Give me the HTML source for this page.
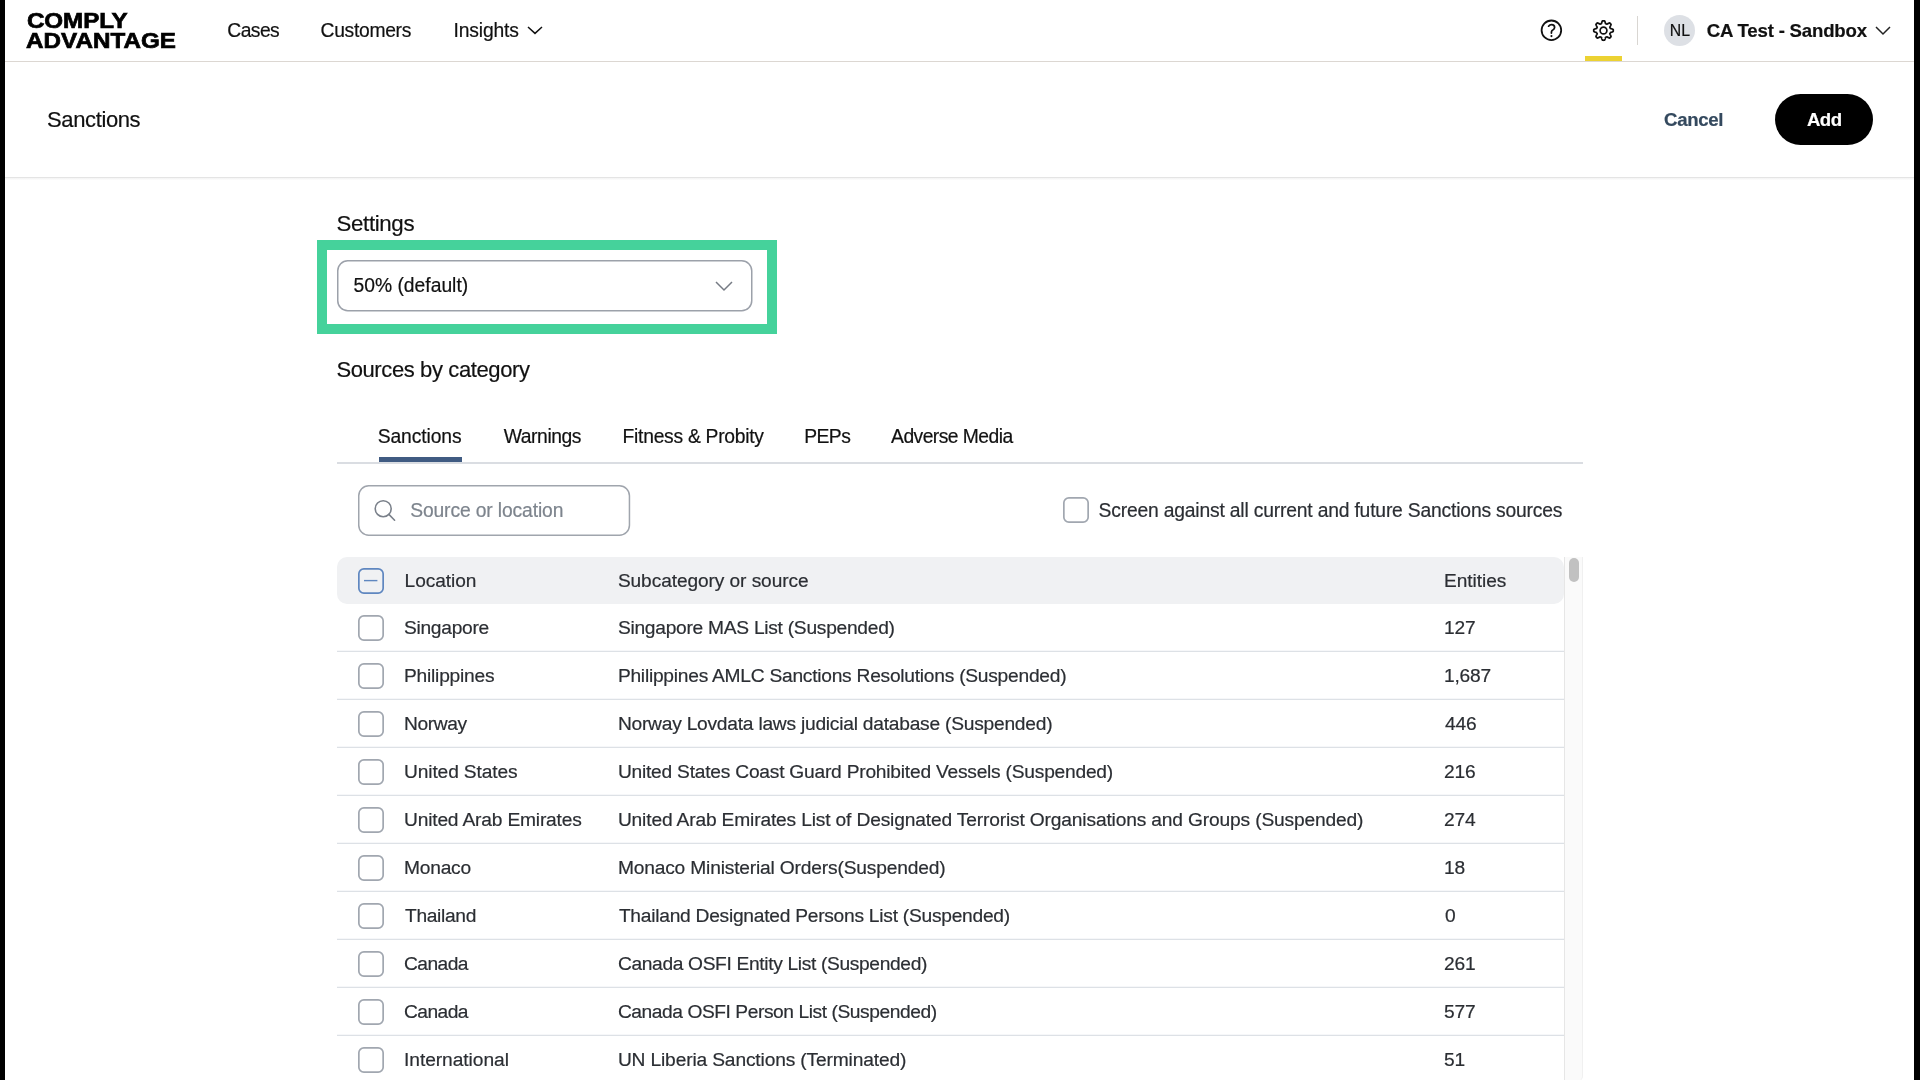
<!DOCTYPE html>
<html><head><meta charset="utf-8"><title>Sanctions</title>
<style>
html,body{margin:0;padding:0;background:#fff;width:1920px;height:1080px;overflow:hidden;position:relative}
body{font-family:"Liberation Sans", sans-serif}
.t{position:absolute;white-space:nowrap;font-family:"Liberation Sans", sans-serif;-webkit-text-stroke:0.2px currentColor}
</style></head><body>
<div style="position:absolute;left:0;top:0;width:1920px;height:1080px;will-change:transform">
<div style="position:absolute;left:0px;top:0px;width:5.00px;height:1080.00px;background:#000"></div>
<div style="position:absolute;left:1914px;top:0px;width:6.00px;height:1080.00px;background:#000"></div>
<div style="position:absolute;left:5px;top:61px;width:1909.00px;height:1.00px;background:#dcd7d2"></div>
<div class="t" style="left:26.80px;top:10.40px;font-size:22px;line-height:22px;font-weight:700;letter-spacing:-0.1px;transform:scaleX(1.10);transform-origin:0 0;-webkit-text-stroke:0.7px currentColor;;color:#000">COMPLY</div>
<div class="t" style="left:26.00px;top:30.10px;font-size:22px;line-height:22px;font-weight:700;letter-spacing:0.038px;transform:scaleX(1.10);transform-origin:0 0;-webkit-text-stroke:0.7px currentColor;;color:#000">ADVANTAGE</div>
<div class="t" style="left:227.30px;top:21.20px;font-size:19.3px;line-height:19.3px;font-weight:400;letter-spacing:-0.55px;;color:#111">Cases</div>
<div class="t" style="left:320.60px;top:21.20px;font-size:19.3px;line-height:19.3px;font-weight:400;letter-spacing:-0.312px;;color:#111">Customers</div>
<div class="t" style="left:453.50px;top:21.00px;font-size:19.3px;line-height:19.3px;font-weight:400;letter-spacing:-0.143px;;color:#111">Insights</div>
<svg style="position:absolute;left:526px;top:24.8px" width="18" height="10.400000000000002"><polyline points="2,2 9.0,8.400000000000002 16,2" fill="none" stroke="#111" stroke-width="1.5"/></svg>
<svg style="position:absolute;left:1539px;top:18px" width="25" height="25" viewBox="0 0 25 25"><circle cx="12.4" cy="12.3" r="9.8" fill="none" stroke="#111" stroke-width="1.8"/><path d="M9.6 8.2 C10.4 7.1 11.4 6.6 12.6 6.6 C14.3 6.6 15.6 7.8 15.6 9.4 C15.6 11.2 13.9 11.9 13.0 12.7 C12.5 13.2 12.4 13.9 12.4 15.0" fill="none" stroke="#111" stroke-width="1.75" stroke-linecap="round"/><circle cx="12.45" cy="18.1" r="1.05" fill="#111"/></svg>
<svg style="position:absolute;left:1590.8px;top:18px" width="25" height="25" viewBox="0 0 25 25"><polygon points="22.25,12.50 22.25,12.69 22.24,12.88 22.23,13.07 22.22,13.26 22.20,13.46 21.99,13.62 21.72,13.78 21.42,13.91 21.11,14.04 20.79,14.15 20.47,14.25 20.15,14.34 19.85,14.42 19.57,14.49 19.34,14.58 19.30,14.71 19.26,14.84 19.21,14.97 19.16,15.11 19.11,15.24 19.05,15.37 18.99,15.49 18.93,15.62 18.87,15.75 18.81,15.87 18.91,16.09 19.05,16.34 19.21,16.61 19.37,16.90 19.53,17.19 19.67,17.50 19.81,17.81 19.92,18.12 20.01,18.42 20.04,18.69 19.91,18.83 19.79,18.98 19.66,19.12 19.53,19.26 19.39,19.39 19.26,19.53 19.12,19.66 18.98,19.79 18.83,19.91 18.69,20.04 18.42,20.01 18.12,19.92 17.81,19.81 17.50,19.67 17.19,19.53 16.90,19.37 16.61,19.21 16.34,19.05 16.09,18.91 15.87,18.81 15.75,18.87 15.62,18.93 15.49,18.99 15.37,19.05 15.24,19.11 15.11,19.16 14.97,19.21 14.84,19.26 14.71,19.30 14.58,19.34 14.49,19.57 14.42,19.85 14.34,20.15 14.25,20.47 14.15,20.79 14.04,21.11 13.91,21.42 13.78,21.72 13.62,21.99 13.46,22.20 13.26,22.22 13.07,22.23 12.88,22.24 12.69,22.25 12.50,22.25 12.31,22.25 12.12,22.24 11.93,22.23 11.74,22.22 11.54,22.20 11.38,21.99 11.22,21.72 11.09,21.42 10.96,21.11 10.85,20.79 10.75,20.47 10.66,20.15 10.58,19.85 10.51,19.57 10.42,19.34 10.29,19.30 10.16,19.26 10.03,19.21 9.89,19.16 9.76,19.11 9.63,19.05 9.51,18.99 9.38,18.93 9.25,18.87 9.13,18.81 8.91,18.91 8.66,19.05 8.39,19.21 8.10,19.37 7.81,19.53 7.50,19.67 7.19,19.81 6.88,19.92 6.58,20.01 6.31,20.04 6.17,19.91 6.02,19.79 5.88,19.66 5.74,19.53 5.61,19.39 5.47,19.26 5.34,19.12 5.21,18.98 5.09,18.83 4.96,18.69 4.99,18.42 5.08,18.12 5.19,17.81 5.33,17.50 5.47,17.19 5.63,16.90 5.79,16.61 5.95,16.34 6.09,16.09 6.19,15.87 6.13,15.75 6.07,15.62 6.01,15.49 5.95,15.37 5.89,15.24 5.84,15.11 5.79,14.97 5.74,14.84 5.70,14.71 5.66,14.58 5.43,14.49 5.15,14.42 4.85,14.34 4.53,14.25 4.21,14.15 3.89,14.04 3.58,13.91 3.28,13.78 3.01,13.62 2.80,13.46 2.78,13.26 2.77,13.07 2.76,12.88 2.75,12.69 2.75,12.50 2.75,12.31 2.76,12.12 2.77,11.93 2.78,11.74 2.80,11.54 3.01,11.38 3.28,11.22 3.58,11.09 3.89,10.96 4.21,10.85 4.53,10.75 4.85,10.66 5.15,10.58 5.43,10.51 5.66,10.42 5.70,10.29 5.74,10.16 5.79,10.03 5.84,9.89 5.89,9.76 5.95,9.63 6.01,9.51 6.07,9.38 6.13,9.25 6.19,9.13 6.09,8.91 5.95,8.66 5.79,8.39 5.63,8.10 5.47,7.81 5.33,7.50 5.19,7.19 5.08,6.88 4.99,6.58 4.96,6.31 5.09,6.17 5.21,6.02 5.34,5.88 5.47,5.74 5.61,5.61 5.74,5.47 5.88,5.34 6.02,5.21 6.17,5.09 6.31,4.96 6.58,4.99 6.88,5.08 7.19,5.19 7.50,5.33 7.81,5.47 8.10,5.63 8.39,5.79 8.66,5.95 8.91,6.09 9.13,6.19 9.25,6.13 9.38,6.07 9.51,6.01 9.63,5.95 9.76,5.89 9.89,5.84 10.03,5.79 10.16,5.74 10.29,5.70 10.42,5.66 10.51,5.43 10.58,5.15 10.66,4.85 10.75,4.53 10.85,4.21 10.96,3.89 11.09,3.58 11.22,3.28 11.38,3.01 11.54,2.80 11.74,2.78 11.93,2.77 12.12,2.76 12.31,2.75 12.50,2.75 12.69,2.75 12.88,2.76 13.07,2.77 13.26,2.78 13.46,2.80 13.62,3.01 13.78,3.28 13.91,3.58 14.04,3.89 14.15,4.21 14.25,4.53 14.34,4.85 14.42,5.15 14.49,5.43 14.58,5.66 14.71,5.70 14.84,5.74 14.97,5.79 15.11,5.84 15.24,5.89 15.37,5.95 15.49,6.01 15.62,6.07 15.75,6.13 15.87,6.19 16.09,6.09 16.34,5.95 16.61,5.79 16.90,5.63 17.19,5.47 17.50,5.33 17.81,5.19 18.12,5.08 18.42,4.99 18.69,4.96 18.83,5.09 18.98,5.21 19.12,5.34 19.26,5.47 19.39,5.61 19.53,5.74 19.66,5.88 19.79,6.02 19.91,6.17 20.04,6.31 20.01,6.58 19.92,6.88 19.81,7.19 19.67,7.50 19.53,7.81 19.37,8.10 19.21,8.39 19.05,8.66 18.91,8.91 18.81,9.13 18.87,9.25 18.93,9.38 18.99,9.51 19.05,9.63 19.11,9.76 19.16,9.89 19.21,10.03 19.26,10.16 19.30,10.29 19.34,10.42 19.57,10.51 19.85,10.58 20.15,10.66 20.47,10.75 20.79,10.85 21.11,10.96 21.42,11.09 21.72,11.22 21.99,11.38 22.20,11.54 22.22,11.74 22.23,11.93 22.24,12.12 22.25,12.31" fill="none" stroke="#111" stroke-width="1.75" stroke-linejoin="round"/><circle cx="12.5" cy="12.5" r="3.4" fill="none" stroke="#111" stroke-width="1.7"/></svg>
<div style="position:absolute;left:1585px;top:56px;width:37.00px;height:5.00px;background:#ecd232"></div>
<div style="position:absolute;left:1637px;top:16px;width:1.00px;height:29.00px;background:#d9d6d2"></div>
<div style="position:absolute;left:1664.2px;top:14.9px;width:31px;height:31px;border-radius:50%;background:#dde0e5"></div>
<div class="t" style="left:1669.80px;top:23.30px;font-size:15.8px;line-height:15.8px;font-weight:400;letter-spacing:0.0px;;color:#111">NL</div>
<div class="t" style="left:1706.80px;top:21.90px;font-size:18.6px;line-height:18.6px;font-weight:700;letter-spacing:-0.188px;;color:#111">CA Test - Sandbox</div>
<svg style="position:absolute;left:1874px;top:24.8px" width="18" height="10.999999999999996"><polyline points="2,2 9.0,8.999999999999996 16,2" fill="none" stroke="#222" stroke-width="1.5"/></svg>
<div style="position:absolute;left:5px;top:177px;width:1909.00px;height:1.00px;background:#e4e4e4"></div>
<div style="position:absolute;left:5px;top:178px;width:1909.00px;height:2.00px;background:linear-gradient(#f3f3f3,#fdfdfd)"></div>
<div class="t" style="left:47.00px;top:109.00px;font-size:22px;line-height:22px;font-weight:400;letter-spacing:-0.375px;;color:#111">Sanctions</div>
<div class="t" style="left:1664.00px;top:111.00px;font-size:18.6px;line-height:18.6px;font-weight:700;letter-spacing:-0.3px;;color:#34495e">Cancel</div>
<div style="position:absolute;left:1775px;top:93.5px;width:98px;height:51.5px;border-radius:26px;background:#000"></div>
<div class="t" style="left:1806.90px;top:111.00px;font-size:18.6px;line-height:18.6px;font-weight:700;letter-spacing:-0.45px;;color:#fff">Add</div>
<div class="t" style="left:336.50px;top:213.20px;font-size:22.3px;line-height:22.3px;font-weight:400;letter-spacing:-0.357px;;color:#111">Settings</div>
<div style="position:absolute;left:317px;top:240px;width:440px;height:74px;border:10px solid #45d29b"></div>
<svg style="position:absolute;left:337px;top:260px;overflow:visible" width="415.50" height="51.50"><rect x="0.75" y="0.75" width="414.00" height="50.00" rx="10" fill="none" stroke="#9ca1aa" stroke-width="1.5"/></svg>
<div class="t" style="left:353.50px;top:275.90px;font-size:19.3px;line-height:19.3px;font-weight:400;letter-spacing:0.0px;;color:#111">50% (default)</div>
<svg style="position:absolute;left:714px;top:279.5px" width="20" height="12.0"><polyline points="2,2 10.0,10.0 18,2" fill="none" stroke="#767b84" stroke-width="1.5"/></svg>
<div class="t" style="left:336.40px;top:358.50px;font-size:22px;line-height:22px;font-weight:400;letter-spacing:-0.389px;;color:#111">Sources by category</div>
<div class="t" style="left:377.75px;top:427.10px;font-size:19.3px;line-height:19.3px;font-weight:400;letter-spacing:-0.106px;;color:#111">Sanctions</div>
<div class="t" style="left:503.75px;top:427.10px;font-size:19.3px;line-height:19.3px;font-weight:400;letter-spacing:-0.429px;;color:#111">Warnings</div>
<div class="t" style="left:622.60px;top:427.10px;font-size:19.3px;line-height:19.3px;font-weight:400;letter-spacing:-0.275px;;color:#111">Fitness &amp; Probity</div>
<div class="t" style="left:804.22px;top:427.10px;font-size:19.3px;line-height:19.3px;font-weight:400;letter-spacing:-0.55px;;color:#111">PEPs</div>
<div class="t" style="left:891.10px;top:427.10px;font-size:19.3px;line-height:19.3px;font-weight:400;letter-spacing:-0.542px;;color:#111">Adverse Media</div>
<div style="position:absolute;left:337px;top:462px;width:1246.00px;height:2.00px;background:#dadde2"></div>
<div style="position:absolute;left:378.5px;top:457px;width:83.00px;height:5.30px;background:#405b82"></div>
<svg style="position:absolute;left:358px;top:485px;overflow:visible" width="272.20" height="51.00"><rect x="0.75" y="0.75" width="270.70" height="49.50" rx="10" fill="none" stroke="#a0a5ad" stroke-width="1.5"/></svg>
<svg style="position:absolute;left:372px;top:498px" width="26" height="26"><circle cx="11.2" cy="10.7" r="8" fill="none" stroke="#7a808a" stroke-width="1.6"/><line x1="16.9" y1="16.4" x2="22.6" y2="22.2" stroke="#7a808a" stroke-width="1.6" stroke-linecap="round"/></svg>
<div class="t" style="left:410.20px;top:501.30px;font-size:19.3px;line-height:19.3px;font-weight:400;letter-spacing:-0.129px;;color:#7d848d">Source or location</div>
<svg style="position:absolute;left:1062.7px;top:497.3px;overflow:visible" width="26.00" height="26.00"><rect x="0.85" y="0.85" width="24.30" height="24.30" rx="5" fill="none" stroke="#a1a7b0" stroke-width="1.7"/></svg>
<div class="t" style="left:1098.50px;top:501.00px;font-size:19.3px;line-height:19.3px;font-weight:400;letter-spacing:-0.18px;;color:#2b2e33">Screen against all current and future Sanctions sources</div>
<div style="position:absolute;left:337px;top:557px;width:1227px;height:47px;border-radius:10px;background:#f0f1f3"></div>
<svg style="position:absolute;left:358px;top:567.6px;overflow:visible" width="26.00" height="26.00"><rect x="0.85" y="0.85" width="24.30" height="24.30" rx="5" fill="none" stroke="#5f87c0" stroke-width="1.7"/></svg>
<svg style="position:absolute;left:360px;top:575px" width="22" height="12"><line x1="4" y1="5.6" x2="17.4" y2="5.6" stroke="#5f87c0" stroke-width="1.4"/></svg>
<div class="t" style="left:404.60px;top:571.00px;font-size:19.1px;line-height:19.1px;font-weight:400;letter-spacing:-0.057px;;color:#2b2e33">Location</div>
<div class="t" style="left:617.90px;top:571.00px;font-size:19.1px;line-height:19.1px;font-weight:400;letter-spacing:-0.07px;;color:#2b2e33">Subcategory or source</div>
<div class="t" style="left:1444.00px;top:571.00px;font-size:19.1px;line-height:19.1px;font-weight:400;letter-spacing:-0.029px;;color:#2b2e33">Entities</div>
<svg style="position:absolute;left:358px;top:614.5px;overflow:visible" width="26.00" height="26.00"><rect x="0.85" y="0.85" width="24.30" height="24.30" rx="5" fill="none" stroke="#a1a7b0" stroke-width="1.7"/></svg>
<div class="t" style="left:404.00px;top:618.00px;font-size:19.2px;line-height:19.2px;font-weight:400;letter-spacing:-0.288px;;color:#2b2e33">Singapore</div>
<div class="t" style="left:617.90px;top:618.00px;font-size:19.2px;line-height:19.2px;font-weight:400;letter-spacing:-0.266px;;color:#2b2e33">Singapore MAS List (Suspended)</div>
<div class="t" style="left:1444.00px;top:618.00px;font-size:19.2px;line-height:19.2px;font-weight:400;letter-spacing:-0.2px;;color:#2b2e33">127</div>
<div style="position:absolute;left:337px;top:650px;width:1227.00px;height:1.00px;background:#f6f7f9"></div>
<div style="position:absolute;left:337px;top:651px;width:1227.00px;height:1.00px;background:#dde1e6"></div>
<svg style="position:absolute;left:358px;top:662.5px;overflow:visible" width="26.00" height="26.00"><rect x="0.85" y="0.85" width="24.30" height="24.30" rx="5" fill="none" stroke="#a1a7b0" stroke-width="1.7"/></svg>
<div class="t" style="left:404.00px;top:666.00px;font-size:19.2px;line-height:19.2px;font-weight:400;letter-spacing:-0.22px;;color:#2b2e33">Philippines</div>
<div class="t" style="left:617.90px;top:666.00px;font-size:19.2px;line-height:19.2px;font-weight:400;letter-spacing:-0.247px;;color:#2b2e33">Philippines AMLC Sanctions Resolutions (Suspended)</div>
<div class="t" style="left:1444.00px;top:666.00px;font-size:19.2px;line-height:19.2px;font-weight:400;letter-spacing:-0.2px;;color:#2b2e33">1,687</div>
<div style="position:absolute;left:337px;top:698px;width:1227.00px;height:1.00px;background:#f6f7f9"></div>
<div style="position:absolute;left:337px;top:699px;width:1227.00px;height:1.00px;background:#dde1e6"></div>
<svg style="position:absolute;left:358px;top:710.5px;overflow:visible" width="26.00" height="26.00"><rect x="0.85" y="0.85" width="24.30" height="24.30" rx="5" fill="none" stroke="#a1a7b0" stroke-width="1.7"/></svg>
<div class="t" style="left:404.00px;top:714.00px;font-size:19.2px;line-height:19.2px;font-weight:400;letter-spacing:-0.4px;;color:#2b2e33">Norway</div>
<div class="t" style="left:617.90px;top:714.00px;font-size:19.2px;line-height:19.2px;font-weight:400;letter-spacing:-0.233px;;color:#2b2e33">Norway Lovdata laws judicial database (Suspended)</div>
<div class="t" style="left:1445.00px;top:714.00px;font-size:19.2px;line-height:19.2px;font-weight:400;letter-spacing:-0.2px;;color:#2b2e33">446</div>
<div style="position:absolute;left:337px;top:746px;width:1227.00px;height:1.00px;background:#f6f7f9"></div>
<div style="position:absolute;left:337px;top:747px;width:1227.00px;height:1.00px;background:#dde1e6"></div>
<svg style="position:absolute;left:358px;top:758.5px;overflow:visible" width="26.00" height="26.00"><rect x="0.85" y="0.85" width="24.30" height="24.30" rx="5" fill="none" stroke="#a1a7b0" stroke-width="1.7"/></svg>
<div class="t" style="left:404.00px;top:762.00px;font-size:19.2px;line-height:19.2px;font-weight:400;letter-spacing:-0.133px;;color:#2b2e33">United States</div>
<div class="t" style="left:617.90px;top:762.00px;font-size:19.2px;line-height:19.2px;font-weight:400;letter-spacing:-0.225px;;color:#2b2e33">United States Coast Guard Prohibited Vessels (Suspended)</div>
<div class="t" style="left:1444.00px;top:762.00px;font-size:19.2px;line-height:19.2px;font-weight:400;letter-spacing:-0.2px;;color:#2b2e33">216</div>
<div style="position:absolute;left:337px;top:794px;width:1227.00px;height:1.00px;background:#f6f7f9"></div>
<div style="position:absolute;left:337px;top:795px;width:1227.00px;height:1.00px;background:#dde1e6"></div>
<svg style="position:absolute;left:358px;top:806.5px;overflow:visible" width="26.00" height="26.00"><rect x="0.85" y="0.85" width="24.30" height="24.30" rx="5" fill="none" stroke="#a1a7b0" stroke-width="1.7"/></svg>
<div class="t" style="left:404.00px;top:810.00px;font-size:19.2px;line-height:19.2px;font-weight:400;letter-spacing:-0.184px;;color:#2b2e33">United Arab Emirates</div>
<div class="t" style="left:617.90px;top:810.00px;font-size:19.2px;line-height:19.2px;font-weight:400;letter-spacing:-0.158px;;color:#2b2e33">United Arab Emirates List of Designated Terrorist Organisations and Groups (Suspended)</div>
<div class="t" style="left:1444.00px;top:810.00px;font-size:19.2px;line-height:19.2px;font-weight:400;letter-spacing:-0.2px;;color:#2b2e33">274</div>
<div style="position:absolute;left:337px;top:842px;width:1227.00px;height:1.00px;background:#f6f7f9"></div>
<div style="position:absolute;left:337px;top:843px;width:1227.00px;height:1.00px;background:#dde1e6"></div>
<svg style="position:absolute;left:358px;top:854.5px;overflow:visible" width="26.00" height="26.00"><rect x="0.85" y="0.85" width="24.30" height="24.30" rx="5" fill="none" stroke="#a1a7b0" stroke-width="1.7"/></svg>
<div class="t" style="left:404.00px;top:858.00px;font-size:19.2px;line-height:19.2px;font-weight:400;letter-spacing:-0.22px;;color:#2b2e33">Monaco</div>
<div class="t" style="left:617.90px;top:858.00px;font-size:19.2px;line-height:19.2px;font-weight:400;letter-spacing:-0.176px;;color:#2b2e33">Monaco Ministerial Orders(Suspended)</div>
<div class="t" style="left:1444.00px;top:858.00px;font-size:19.2px;line-height:19.2px;font-weight:400;letter-spacing:-0.2px;;color:#2b2e33">18</div>
<div style="position:absolute;left:337px;top:890px;width:1227.00px;height:1.00px;background:#f6f7f9"></div>
<div style="position:absolute;left:337px;top:891px;width:1227.00px;height:1.00px;background:#dde1e6"></div>
<svg style="position:absolute;left:358px;top:902.5px;overflow:visible" width="26.00" height="26.00"><rect x="0.85" y="0.85" width="24.30" height="24.30" rx="5" fill="none" stroke="#a1a7b0" stroke-width="1.7"/></svg>
<div class="t" style="left:405.00px;top:906.00px;font-size:19.2px;line-height:19.2px;font-weight:400;letter-spacing:-0.329px;;color:#2b2e33">Thailand</div>
<div class="t" style="left:618.90px;top:906.00px;font-size:19.2px;line-height:19.2px;font-weight:400;letter-spacing:-0.253px;;color:#2b2e33">Thailand Designated Persons List (Suspended)</div>
<div class="t" style="left:1445.00px;top:906.00px;font-size:19.2px;line-height:19.2px;font-weight:400;letter-spacing:-0.2px;;color:#2b2e33">0</div>
<div style="position:absolute;left:337px;top:938px;width:1227.00px;height:1.00px;background:#f6f7f9"></div>
<div style="position:absolute;left:337px;top:939px;width:1227.00px;height:1.00px;background:#dde1e6"></div>
<svg style="position:absolute;left:358px;top:950.5px;overflow:visible" width="26.00" height="26.00"><rect x="0.85" y="0.85" width="24.30" height="24.30" rx="5" fill="none" stroke="#a1a7b0" stroke-width="1.7"/></svg>
<div class="t" style="left:404.00px;top:954.00px;font-size:19.2px;line-height:19.2px;font-weight:400;letter-spacing:-0.55px;;color:#2b2e33">Canada</div>
<div class="t" style="left:617.90px;top:954.00px;font-size:19.2px;line-height:19.2px;font-weight:400;letter-spacing:-0.338px;;color:#2b2e33">Canada OSFI Entity List (Suspended)</div>
<div class="t" style="left:1444.00px;top:954.00px;font-size:19.2px;line-height:19.2px;font-weight:400;letter-spacing:-0.2px;;color:#2b2e33">261</div>
<div style="position:absolute;left:337px;top:986px;width:1227.00px;height:1.00px;background:#f6f7f9"></div>
<div style="position:absolute;left:337px;top:987px;width:1227.00px;height:1.00px;background:#dde1e6"></div>
<svg style="position:absolute;left:358px;top:998.5px;overflow:visible" width="26.00" height="26.00"><rect x="0.85" y="0.85" width="24.30" height="24.30" rx="5" fill="none" stroke="#a1a7b0" stroke-width="1.7"/></svg>
<div class="t" style="left:404.00px;top:1002.00px;font-size:19.2px;line-height:19.2px;font-weight:400;letter-spacing:-0.55px;;color:#2b2e33">Canada</div>
<div class="t" style="left:617.90px;top:1002.00px;font-size:19.2px;line-height:19.2px;font-weight:400;letter-spacing:-0.432px;;color:#2b2e33">Canada OSFI Person List (Suspended)</div>
<div class="t" style="left:1444.00px;top:1002.00px;font-size:19.2px;line-height:19.2px;font-weight:400;letter-spacing:-0.2px;;color:#2b2e33">577</div>
<div style="position:absolute;left:337px;top:1034px;width:1227.00px;height:1.00px;background:#f6f7f9"></div>
<div style="position:absolute;left:337px;top:1035px;width:1227.00px;height:1.00px;background:#dde1e6"></div>
<svg style="position:absolute;left:358px;top:1046.5px;overflow:visible" width="26.00" height="26.00"><rect x="0.85" y="0.85" width="24.30" height="24.30" rx="5" fill="none" stroke="#a1a7b0" stroke-width="1.7"/></svg>
<div class="t" style="left:404.00px;top:1050.00px;font-size:19.2px;line-height:19.2px;font-weight:400;letter-spacing:-0.058px;;color:#2b2e33">International</div>
<div class="t" style="left:617.90px;top:1050.00px;font-size:19.2px;line-height:19.2px;font-weight:400;letter-spacing:-0.15px;;color:#2b2e33">UN Liberia Sanctions (Terminated)</div>
<div class="t" style="left:1444.00px;top:1050.00px;font-size:19.2px;line-height:19.2px;font-weight:400;letter-spacing:-0.2px;;color:#2b2e33">51</div>
<div style="position:absolute;left:1564px;top:557px;width:19.00px;height:524.00px;background:#fafafa;border-left:1px solid #e6e6e6;border-right:1px solid #f0f0f0;border-bottom-right-radius:5px;box-sizing:border-box"></div>
<div style="position:absolute;left:1569px;top:558px;width:10px;height:24px;border-radius:5px;background:#c1c1c1"></div>
</div>
</body></html>
